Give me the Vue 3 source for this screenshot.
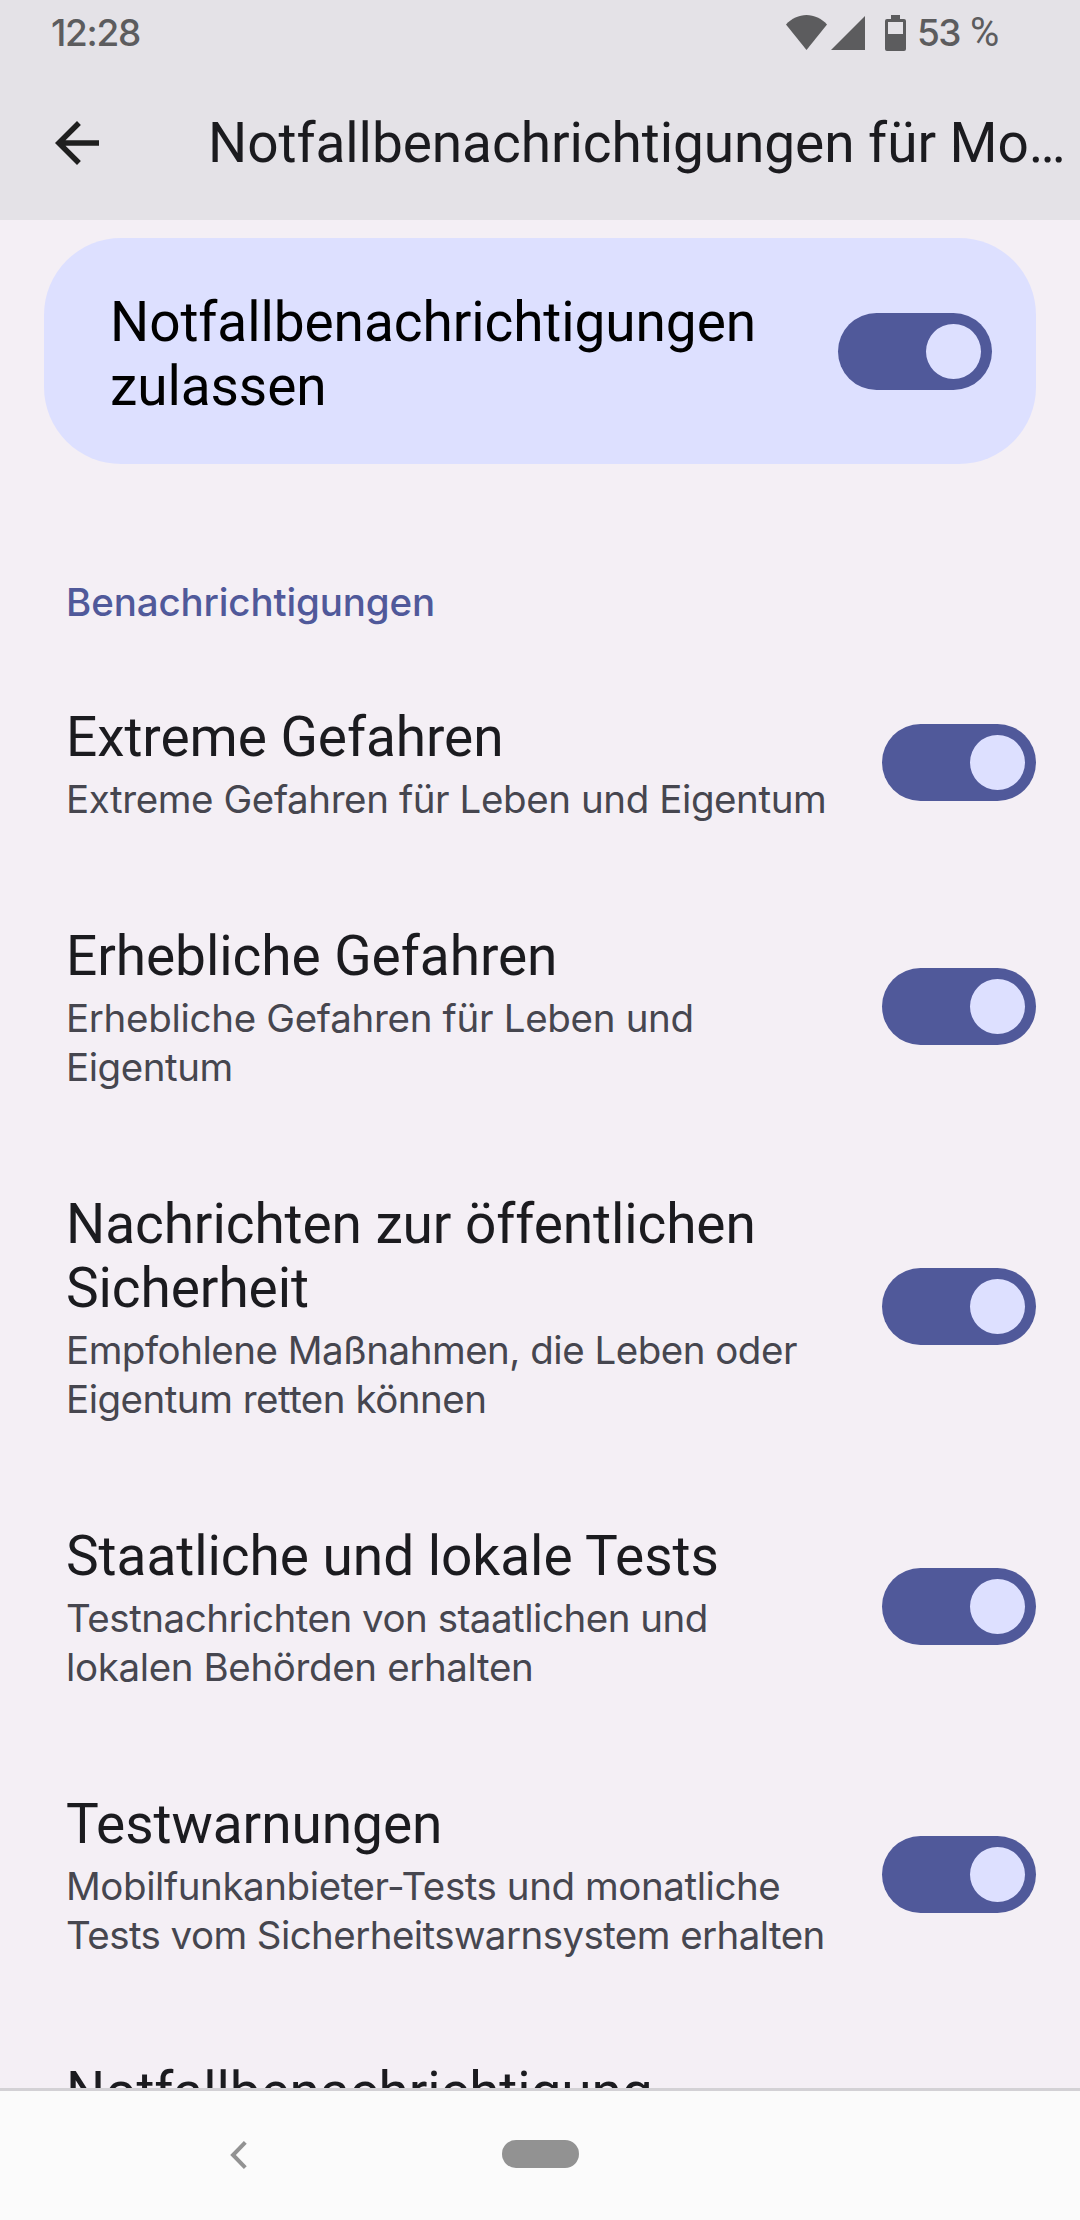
<script setup>
import { ref } from 'vue'

// tracking values are in px, one per rendered line
const items = ref([
  {
    title: [{ text: 'Extreme Gefahren', tracking: -0.06 }],
    summary: [{ text: 'Extreme Gefahren für Leben und Eigentum', tracking: -0.41 }],
    on: true,
  },
  {
    title: [{ text: 'Erhebliche Gefahren', tracking: -0.06 }],
    summary: [
      { text: 'Erhebliche Gefahren für Leben und', tracking: -0.31 },
      { text: 'Eigentum', tracking: -0.45 },
    ],
    on: true,
  },
  {
    title: [
      { text: 'Nachrichten zur öffentlichen', tracking: -0.09 },
      { text: 'Sicherheit', tracking: -0.09 },
    ],
    summary: [
      { text: 'Empfohlene Maßnahmen, die Leben oder', tracking: -0.5 },
      { text: 'Eigentum retten können', tracking: -0.5 },
    ],
    on: true,
  },
  {
    title: [{ text: 'Staatliche und lokale Tests', tracking: -0.05 }],
    summary: [
      { text: 'Testnachrichten von staatlichen und', tracking: -0.48 },
      { text: 'lokalen Behörden erhalten', tracking: -0.37 },
    ],
    on: true,
  },
  {
    title: [{ text: 'Testwarnungen', tracking: -0.06 }],
    summary: [
      { text: 'Mobilfunkanbieter-Tests und monatliche', tracking: -0.43 },
      { text: 'Tests vom Sicherheitswarnsystem erhalten', tracking: -0.57 },
    ],
    on: true,
  },
  { title: [{ text: 'Notfallbenachrichtigung', tracking: -0.09 }], summary: [], on: null },
])
const allowAll = ref(true)
</script>

<template>
  <div class="screen">
    <header class="top">
      <div class="status">
        <span class="clock">12:28</span>
        <div class="indicators">
          <svg class="wifi" viewBox="0 0 41 35"><path d="M0 9.5C5.500 3.500 13 0 20.500 0S35.500 3.500 41 9.500L20.500 35z" /></svg>
          <svg class="signal" viewBox="0 0 34 34"><path d="M34 0v34H0z" /></svg>
          <svg class="battery" viewBox="0 0 21 36">
            <path fill-rule="evenodd" d="M6 0h9v4h4a2 2 0 0 1 2 2v28a2 2 0 0 1-2 2H2a2 2 0 0 1-2-2V6a2 2 0 0 1 2-2h4zM3 7v12h15V7z" />
          </svg>
          <span class="level">53</span>
          <span class="percent">%</span>
        </div>
      </div>
      <div class="toolbar">
        <svg class="back" viewBox="0 0 24 24"><path d="M20 11H7.83l5.59-5.59L12 4l-8 8 8 8 1.410-1.410L7.830 13H20z" /></svg>
        <h1>Notfallbenachrichtigungen für Mo…</h1>
      </div>
    </header>

    <main class="content">
      <section class="card">
        <div class="card-title">Notfallbenachrichtigungen<br />zulassen</div>
        <button class="switch" role="switch" :aria-checked="allowAll" @click="allowAll = !allowAll"><i></i></button>
      </section>

      <h2>Benachrichtigungen</h2>

      <section v-for="item in items" :key="item.title[0].text" class="row">
        <div class="texts">
          <div v-for="l in item.title" :key="l.text" class="title" :style="{ letterSpacing: l.tracking + 'px' }">{{ l.text }}</div>
          <div class="summary">
            <div v-for="l in item.summary" :key="l.text" :style="{ letterSpacing: l.tracking + 'px' }">{{ l.text }}</div>
          </div>
        </div>
        <button v-if="item.on !== null" class="switch" role="switch" :aria-checked="item.on" @click="item.on = !item.on"><i></i></button>
      </section>
    </main>

    <nav class="navbar">
      <svg class="nav-back" viewBox="0 0 17 28"><path d="M15.300 1.400L3 14l12.300 12.600" /></svg>
      <span class="pill"></span>
    </nav>
  </div>
</template>

<style>
body {
  margin: 0;
}
</style>

<style scoped>
.screen {
  width: 1080px;
  height: 2220px;
  display: flex;
  flex-direction: column;
  overflow: hidden;
  background: #f4eff5;
  color: #1b1b1f;
  font-family: Roboto, sans-serif;
}
.top {
  flex: none;
  height: 220px;
  background: #e4e2e7;
}
.status {
  height: 66px;
  display: flex;
  padding-left: 51px;
  color: #5c5c5e;
  font: 500 37px/66px Inter, sans-serif;
}
.clock {
  width: 735px;
  letter-spacing: -1.3px;
}
.indicators {
  display: flex;
  align-items: flex-start;
}
.indicators svg {
  fill: currentColor;
}
.wifi {
  width: 41px;
  height: 35px;
  margin: 15px 4px 0 0;
}
.signal {
  width: 34px;
  height: 34px;
  margin: 16px 20px 0 0;
}
.battery {
  width: 21px;
  height: 36px;
  margin: 15px 11px 0 0;
}
.level {
  width: 53px;
  letter-spacing: -1.7px;
}
.percent {
  font: 400 40px/66px Roboto, sans-serif;
}
.toolbar {
  height: 154px;
  display: flex;
  align-items: center;
  padding-left: 44px;
}
.back {
  width: 66px;
  height: 66px;
  margin-right: 98px;
  fill: #1f1f1f;
}
h1 {
  margin: 0;
  font-size: 55px;
  font-weight: 400;
  line-height: 64px;
  letter-spacing: -0.07px;
  white-space: nowrap;
}
.content {
  flex: 1;
  min-height: 0;
  overflow: hidden;
  display: flex;
  flex-direction: column;
}
.card {
  flex: none;
  display: flex;
  align-items: center;
  justify-content: space-between;
  height: 226px;
  margin: 18px 44px 0;
  padding: 0 44px 0 66px;
  box-sizing: border-box;
  border-radius: 77px;
  background: #dde0ff;
  color: #000;
}
.card-title {
  padding-top: 6px;
  font-size: 55px;
  line-height: 64px;
  letter-spacing: -0.09px;
}
.switch {
  flex: none;
  width: 154px;
  height: 77px;
  padding: 0 11px;
  border: 0;
  border-radius: 39px;
  background: #50599a;
  display: flex;
  align-items: center;
}
.switch[aria-checked='true'] {
  justify-content: flex-end;
}
.switch i {
  width: 55px;
  height: 55px;
  border-radius: 50%;
  background: #dde0ff;
}
h2 {
  flex: none;
  margin: 113px 66px 25px;
  font: 500 38.5px/51px Inter, sans-serif;
  letter-spacing: -0.13px;
  color: #50599a;
}
.row {
  flex: none;
  display: flex;
  align-items: center;
  justify-content: space-between;
  padding: 0 44px 0 66px;
}
.texts {
  padding: 52px 0 48px;
  white-space: nowrap;
}
.title {
  font-size: 55px;
  line-height: 64px;
}
.summary {
  padding-top: 6px;
  font: 400 38.5px/49px Inter, sans-serif;
  color: #46464f;
}
.navbar {
  flex: none;
  height: 132px;
  box-sizing: border-box;
  border-top: 3px solid #d3d1d5;
  background: #fbfbfb;
  display: flex;
  align-items: flex-start;
  padding: 49px 0 0 230px;
}
.nav-back {
  width: 17px;
  height: 28px;
  margin: 1px 255px 0 0;
  fill: none;
  stroke: #929292;
  stroke-width: 4;
}
.pill {
  width: 77px;
  height: 28px;
  border-radius: 14px;
  background: #929292;
}
</style>
